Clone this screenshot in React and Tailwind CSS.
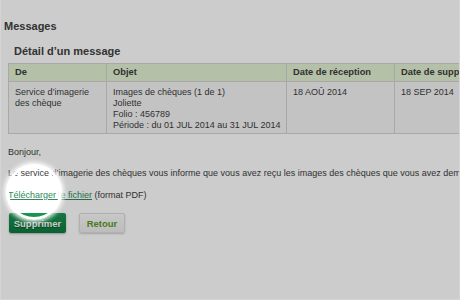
import React from 'react';

const font = { fontFamily: '"Liberation Sans", Arial, sans-serif' };

function MessageTable() {
  return (
    <table className="table-fixed border-collapse w-[488px] text-[9px] leading-[11px] text-[#3c3c3c]">
      <colgroup>
        <col className="w-[98px]" />
        <col className="w-[180px]" />
        <col className="w-[108px]" />
        <col className="w-[102px]" />
      </colgroup>
      <thead>
        <tr className="bg-[#e2f0d3] h-[18px]">
          {['De', 'Objet', 'Date de réception', 'Date de suppression'].map((h) => (
            <th key={h} className="border border-[#d2d2d2] px-[6px] text-left font-bold whitespace-nowrap text-[9.3px]">
              {h}
            </th>
          ))}
        </tr>
      </thead>
      <tbody>
        <tr className="bg-[#f4f4f4] h-[52px] align-top">
          <td className="border border-[#d2d2d2] px-[6px] pt-[5px]">
            Service d’imagerie<br />des chèque
          </td>
          <td className="border border-[#d2d2d2] px-[6px] pt-[5px] whitespace-nowrap">
            Images de chèques (1 de 1)<br />
            Joliette<br />
            Folio : 456789<br />
            Période : du 01 JUL 2014 au 31 JUL 2014
          </td>
          <td className="border border-[#d2d2d2] px-[6px] pt-[5px]">18 AOÛ 2014</td>
          <td className="border border-[#d2d2d2] px-[6px] pt-[5px]">18 SEP 2014</td>
        </tr>
      </tbody>
    </table>
  );
}

export default function App() {
  return (
    <div style={font} className="relative w-[460px] h-[300px] overflow-hidden bg-white border-l border-r border-b border-[#d4d4d4] text-[#404040]">
      <div className="pt-[20px]">
        <h1 className="pl-[3px] text-[11px] leading-[13px] font-bold">Messages</h1>
        <h2 className="mt-[12px] pl-[13px] text-[11px] leading-[13px] font-bold">Détail d’un message</h2>
        <div className="mt-[5px] pl-[7px]">
          <MessageTable />
        </div>

        <div className="pl-[7px] text-[9px] leading-[11px]">
          <p className="mt-[13px]">Bonjour,</p>
          <p className="mt-[10px] whitespace-nowrap">
            Le service d’imagerie des chèques vous informe que vous avez reçu les images des chèques que vous avez demandées.
          </p>
          <p className="mt-[11px]">
            <a className="text-[#2f8a5c] underline underline-offset-[1px]">Télécharger le fichier</a> (format PDF)
          </p>
          <div className="mt-[12px] flex items-center gap-[13px] pl-[1px]">
            <button className="h-[20px] w-[57px] rounded-[2px] bg-gradient-to-b from-[#1b9553] to-[#0c7a3d] text-white font-bold text-[9.5px] [text-shadow:0_1px_1px_rgba(0,0,0,0.4)] shadow-[0_1px_2px_rgba(0,0,0,0.3)]">
              Supprimer
            </button>
            <button className="h-[20px] w-[46px] rounded-[2px] bg-gradient-to-b from-[#fafafa] to-[#ececec] border border-[#dcdcdc] text-[#5a9a22] font-bold text-[9.5px] shadow-[0_1px_2px_rgba(0,0,0,0.2)]">
              Retour
            </button>
          </div>
        </div>
      </div>

      {/* spotlight overlay */}
      <div className="absolute left-[5px] top-[164px] w-[56px] h-[56px] rounded-full border-[3px] border-white shadow-[0_0_4px_2px_rgba(255,255,255,0.9),0_0_0_700px_rgba(0,0,0,0.2)]" />
    </div>
  );
}
